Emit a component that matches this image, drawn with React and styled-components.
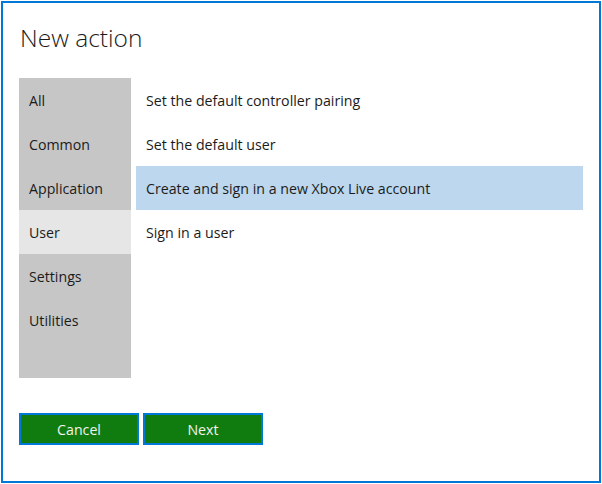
import React, { useState } from 'react';
import styled, { createGlobalStyle } from 'styled-components';

const GlobalStyle = createGlobalStyle`
  html, body {
    margin: 0;
    padding: 0;
    background: #ffffff;
  }
  body {
    font-family: "Open Sans", "Noto Sans", sans-serif;
    color: #1b1b1b;
  }
`;

const Dialog = styled.div`
  box-sizing: border-box;
  margin: 1px 0 0 1px;
  width: 600px;
  height: 482px;
  border: 2px solid #0078d7;
  padding: 16px 16px 0 16px;
  display: flex;
  flex-direction: column;
`;

const Title = styled.h1`
  margin: 0 0 0 1px;
  height: 59px;
  font-size: 24.5px;
  font-weight: 300;
  line-height: 37px;
  color: #1b1b1b;
`;

const Body = styled.div`
  display: flex;
  gap: 5px;
  height: 300px;
`;

const Sidebar = styled.ul`
  list-style: none;
  margin: 0;
  padding: 0;
  width: 112px;
  background: #c6c6c6;
`;

const Tab = styled.li`
  height: 44px;
  line-height: 45px;
  padding-left: 10px;
  font-size: 14.2px;
  background: ${(p) => (p.$active ? '#e6e6e6' : 'transparent')};
  cursor: pointer;
`;

const ActionList = styled.ul`
  list-style: none;
  margin: 0;
  padding: 0;
  width: 447px;
`;

const Action = styled.li`
  height: 44px;
  line-height: 45px;
  padding-left: 10px;
  font-size: 14.2px;
  background: ${(p) => (p.$selected ? '#bdd7ee' : 'transparent')};
  cursor: pointer;
`;

const Footer = styled.div`
  display: flex;
  gap: 4px;
  margin-top: 35px;
`;

const Button = styled.button`
  box-sizing: border-box;
  width: 120px;
  height: 32px;
  border: 2px solid #0078d7;
  background: #107c10;
  color: #f2f2f2;
  font-family: "Open Sans", "Noto Sans", sans-serif;
  font-size: 14.2px;
  padding: 0;
  cursor: pointer;
`;

const tabs = ['All', 'Common', 'Application', 'User', 'Settings', 'Utilities'];

const actions = [
  'Set the default controller pairing',
  'Set the default user',
  'Create and sign in a new Xbox Live account',
  'Sign in a user',
];

export default function App() {
  const [tab, setTab] = useState('User');
  const [selected, setSelected] = useState(2);

  return (
    <>
      <GlobalStyle />
      <Dialog>
        <Title>New action</Title>
        <Body>
          <Sidebar>
            {tabs.map((t) => (
              <Tab key={t} $active={t === tab} onClick={() => setTab(t)}>
                {t}
              </Tab>
            ))}
          </Sidebar>
          <ActionList>
            {actions.map((a, i) => (
              <Action key={a} $selected={i === selected} onClick={() => setSelected(i)}>
                {a}
              </Action>
            ))}
          </ActionList>
        </Body>
        <Footer>
          <Button>Cancel</Button>
          <Button>Next</Button>
        </Footer>
      </Dialog>
    </>
  );
}
